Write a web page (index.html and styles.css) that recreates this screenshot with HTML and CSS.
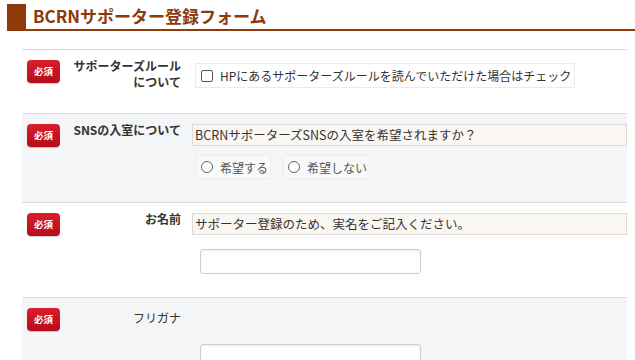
FILE: index.html
```html
<!DOCTYPE html>
<html lang="ja">
<head>
    <meta charset="UTF-8">
    <meta name="viewport" content="width=device-width, initial-scale=1.0">
    <title>BCRNサポーター登録フォーム</title>
    <link rel="stylesheet" href="styles.css">
</head>
<body>

<h2 class="form-title">BCRNサポーター登録フォーム</h2>

<form class="entry-form">
    <div class="form-row">
        <span class="required">必須</span>
        <div class="row-label">サポーターズルール<br>について</div>
        <div class="row-body">
            <label class="check-box">
                <input type="checkbox" name="rule">
                <span>HPにあるサポーターズルールを読んでいただけた場合はチェック</span>
            </label>
        </div>
    </div>

    <div class="form-row alt">
        <span class="required">必須</span>
        <div class="row-label">SNSの入室について</div>
        <div class="row-body">
            <p class="note">BCRNサポーターズSNSの入室を希望されますか？</p>
            <div class="radios">
                <label class="radio-box"><input type="radio" name="sns" value="yes"><span>希望する</span></label>
                <label class="radio-box"><input type="radio" name="sns" value="no"><span>希望しない</span></label>
            </div>
        </div>
    </div>

    <div class="form-row">
        <span class="required">必須</span>
        <div class="row-label">お名前</div>
        <div class="row-body">
            <p class="note">サポーター登録のため、実名をご記入ください。</p>
            <input class="text-input" type="text" name="name">
        </div>
    </div>

    <div class="form-row alt">
        <span class="required">必須</span>
        <div class="row-label light">フリガナ</div>
        <div class="row-body">
            <input class="text-input spaced" type="text" name="kana">
        </div>
    </div>
</form>

</body>
</html>
```

FILE: styles.css
```css
body {
    font-family: "Noto Sans CJK JP", "Noto Sans", sans-serif;
    font-size: 12px;
    color: #333;
    margin: 0;
    padding: 4px 0 0 7px;
    background-color: #fff;
}
.form-title {
    margin: 0;
    padding: 0 0 0 7px;
    height: 25px;
    line-height: 24px;
    font-size: 17px;
    font-weight: bold;
    color: #8c3a0c;
    border-left: 19px solid #8f3a0a;
    border-bottom: 2px solid #8f3a0a;
}
.entry-form {
    margin: 18px 8px 0 15px;
}
.form-row {
    display: flex;
    align-items: flex-start;
    padding: 10px 0 23px 5px;
    border-top: 1px solid #dcdcdc;
}
.form-row.alt {
    background-color: #f4f5f7;
}
.required {
    flex: none;
    width: 33px;
    height: 23px;
    line-height: 23px;
    text-align: center;
    font-size: 9.5px;
    font-weight: bold;
    color: #fff;
    border-radius: 4px;
    background: linear-gradient(#d91e2c, #b80c1a);
    box-shadow: 0 1px 1px rgba(0, 0, 0, 0.2);
}
.row-label {
    flex: none;
    width: 121px;
    margin-top: -2px;
    text-align: right;
    font-weight: bold;
    line-height: 16px;
    color: #333;
}
.row-label.light {
    font-weight: normal;
    margin-top: 2px;
}
.row-body {
    flex: 1;
    margin-left: 11px;
}
.note {
    margin: 0;
    height: 20px;
    line-height: 20px;
    padding: 0 2px;
    font-size: 12.5px;
    background-color: #faf6f2;
    border: 1px solid #dedad6;
}
.check-box {
    display: inline-flex;
    align-items: center;
    height: 23px;
    margin: 3px 0 0 3px;
    padding: 0 3px 0 5px;
    background-color: #fff;
    border: 1px solid #ebebeb;
}
.check-box input {
    appearance: none;
    width: 12px;
    height: 12px;
    margin: 0 7px 0 0;
    border: 1px solid #555;
    border-radius: 2px;
    background-color: #fff;
}
.radios {
    display: flex;
    gap: 12px;
    margin: 9px 0 0 4px;
}
.radio-box {
    display: inline-flex;
    align-items: center;
    height: 22px;
    padding: 0 2px 0 4px;
    color: #555;
    background-color: #f8f9fa;
    border: 1px solid #eceef0;
}
.radio-box input {
    appearance: none;
    box-sizing: border-box;
    width: 12px;
    height: 12px;
    margin: 0 7px 0 0;
    border: 1px solid #666;
    border-radius: 50%;
    background-color: #fff;
}
.text-input {
    display: block;
    box-sizing: border-box;
    width: 221px;
    height: 25px;
    margin: 14px 0 0 8px;
    border: 1px solid #cfcfcf;
    border-radius: 3px;
    background-color: #fff;
    box-shadow: inset 0 1px 2px rgba(0, 0, 0, 0.08);
}
.text-input.spaced {
    margin-top: 36px;
}
```
